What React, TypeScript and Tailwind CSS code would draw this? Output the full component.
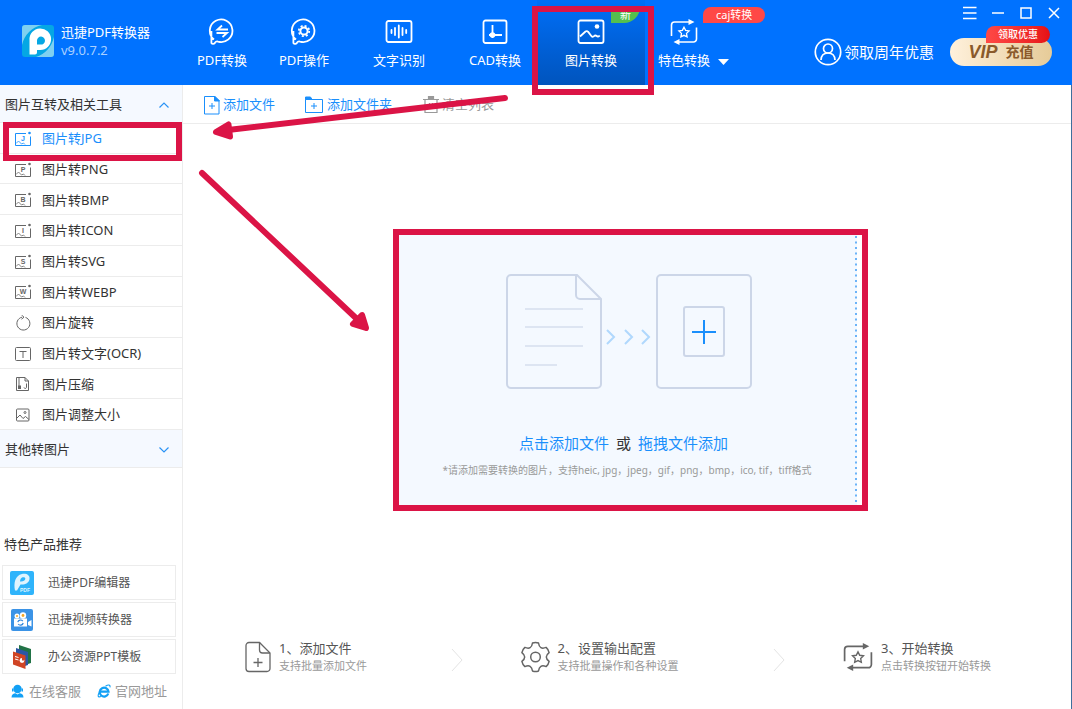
import type { ReactNode } from "react";

const imageTools = [
  { label: "图片转JPG", letter: "J", active: true },
  { label: "图片转PNG", letter: "P" },
  { label: "图片转BMP", letter: "B" },
  { label: "图片转ICON", letter: "I" },
  { label: "图片转SVG", letter: "S" },
  { label: "图片转WEBP", letter: "W" },
  { label: "图片旋转", icon: <RotateIcon /> },
  { label: "图片转文字(OCR)", icon: <OcrIcon /> },
  { label: "图片压缩", icon: <CompressIcon /> },
  { label: "图片调整大小", icon: <ResizeIcon /> },
];

const products = [
  { label: "迅捷PDF编辑器", icon: <EditorLogo /> },
  { label: "迅捷视频转换器", icon: <VideoLogo /> },
  { label: "办公资源PPT模板", icon: <PptLogo /> },
];

/* ---------- header icons ---------- */

function AppLogo() {
  return (
    <svg width="32" height="32" viewBox="0 0 32 32">
      <rect width="32" height="32" rx="3" fill="#05a7e4" />
      <path d="M0 20V3a3 3 0 0 1 3-3h17A26 26 0 0 0 0 20z" fill="#7fd0f0" />
      <path d="M32 12v17a3 3 0 0 1-3 3H14a27 27 0 0 0 18-20z" fill="#7fd0f0" />
      <path
        fillRule="evenodd"
        d="M7.500 29.500V15a10.800 10.800 0 1 1 10.800 10H15v2.500a2 2 0 0 1-2 2zM15 19.500h3.500a4 4 0 1 0-3.500-4z"
        fill="#fff"
      />
    </svg>
  );
}

function BubbleShape() {
  return (
    <path d="M6 21.500A11.300 11.300 0 1 1 10 23.600C8.500 23 7 24 6.800 25.200A2.200 2.200 0 0 1 3.400 25V13" />
  );
}

function PdfConvertIcon() {
  return (
    <svg width="28" height="28" viewBox="0 0 28 28" fill="none" stroke="#fff" strokeWidth="1.800">
      <BubbleShape />
      <path d="M20 11.500H9.500L14 7.500M8.500 15H19L14.500 19" />
    </svg>
  );
}

function PdfEditIcon() {
  return (
    <svg width="28" height="28" viewBox="0 0 28 28" fill="none" stroke="#fff" strokeWidth="1.800">
      <BubbleShape />
      <circle cx="14" cy="13" r="3.600" strokeWidth="2" />
      <circle cx="14" cy="13" r="5.200" strokeWidth="1.800" strokeDasharray="2.040 2.040" />
    </svg>
  );
}

function OcrWaveIcon() {
  return (
    <svg width="28" height="28" viewBox="0 0 28 28" fill="none" stroke="#fff" strokeWidth="1.800">
      <rect x="1.500" y="3" width="25" height="21" rx="2" />
      <path d="M6.500 12v3M10 10v7M13.800 7.500v12M17.500 10v7M21.200 12v3" strokeLinecap="round" />
    </svg>
  );
}

function CadIcon() {
  return (
    <svg width="28" height="28" viewBox="0 0 28 28" fill="none" stroke="#fff" strokeWidth="1.800">
      <rect x="2.500" y="2.500" width="23" height="22.500" rx="2" />
      <path d="M11.500 7v13M8 17h13" />
      <circle cx="11.500" cy="17" r="2.800" fill="#fff" stroke="none" />
    </svg>
  );
}

function PictureIcon() {
  return (
    <svg width="28" height="28" viewBox="0 0 28 28" fill="none" stroke="#fff" strokeWidth="1.800">
      <rect x="1.500" y="2.500" width="25" height="22.500" rx="2" />
      <path d="M3 18.500l5.500-5c1-.8 2-.5 2.700.4l3.300 4.300c.8.900 1.800.7 2.500 0 .9-1 1.800-1 2.700-.2.800.8 2 .7 3-.5" />
      <circle cx="20" cy="8.500" r="2.300" fill="#fff" stroke="none" />
    </svg>
  );
}

function StarCycleIcon({ color, size }: { color: string; size: number }) {
  return (
    <svg width={size} height={size} viewBox="0 0 28 28" fill="none" stroke={color} strokeWidth="1.600">
      <path d="M1.500 18V7a3 3 0 0 1 3-3H20M26.500 9.500V21a3 3 0 0 1-3 3H9" />
      <path d="M18.500 1l6 3-6 3zM9.500 21l-6 3 6 3z" fill={color} stroke="none" />
      <path
        d="M14 9.200l1.600 3.200 3.500.5-2.600 2.500.6 3.500-3.100-1.600-3.100 1.600.6-3.500-2.600-2.500 3.500-.5z"
        strokeWidth="1.300"
      />
    </svg>
  );
}

function UserIcon() {
  return (
    <svg width="28" height="28" viewBox="0 0 28 28" fill="none" stroke="#fff" strokeWidth="1.700">
      <circle cx="14" cy="14" r="12.700" />
      <circle cx="14" cy="10.500" r="4.500" />
      <path d="M7 22c.2-4.500 3-7 7-7s6.800 2.500 7 7" />
    </svg>
  );
}

/* ---------- sidebar icons ---------- */

function FormatIcon({ letter }: { letter: string }) {
  return (
    <svg width="18" height="16" viewBox="0 0 18 16" fill="none" stroke="currentColor">
      <path d="M12 2.500H1.500v12h15v-9" />
      <path d="M2 12.500l2.500-2.500 3 3 2-1 1.500 1.500" strokeWidth=".8" />
      <circle cx="15.500" cy="2" r="1.300" fill="currentColor" stroke="none" />
      <text
        x="9"
        y="10"
        textAnchor="middle"
        fill="currentColor"
        stroke="none"
        className="font-['Liberation_Sans',sans-serif] text-[7px] font-bold"
      >
        {letter}
      </text>
    </svg>
  );
}

function RotateIcon() {
  return (
    <svg width="18" height="16" viewBox="0 0 18 16" fill="none" stroke="currentColor">
      <path d="M11.500 2.400A6.500 6.500 0 1 1 8 2.200" />
      <path d="M7.500 0l2.500 2.200-2.500 2" />
    </svg>
  );
}

function OcrIcon() {
  return (
    <svg width="18" height="16" viewBox="0 0 18 16" fill="none" stroke="currentColor">
      <rect x="1.500" y="1.500" width="15" height="13" rx="1" />
      <path d="M5.500 5.500h7M9 5.500V12" />
    </svg>
  );
}

function CompressIcon() {
  return (
    <svg width="18" height="16" viewBox="0 0 18 16" fill="none" stroke="currentColor">
      <path d="M2.500 1.500h8.500l3.500 3.500v9.500h-12z" />
      <path d="M11 1.500V5h3.500M12.500 7.500v4a1.300 1.300 0 0 1-2.500 0" />
      <path d="M5 2.500v7" strokeWidth="2" strokeDasharray="1 1" />
      <rect x="4" y="9.500" width="3" height="3.500" fill="currentColor" stroke="none" />
    </svg>
  );
}

function ResizeIcon() {
  return (
    <svg width="18" height="16" viewBox="0 0 18 16" fill="none" stroke="currentColor">
      <rect x="2.500" y="2" width="12.500" height="12" rx="1" />
      <path d="M3 11l3-3 3 3.500 2.500-2 3.500 3" />
      <circle cx="11" cy="5.500" r="1" />
    </svg>
  );
}

function EditorLogo() {
  return (
    <svg width="24" height="24" viewBox="0 0 24 24">
      <rect width="24" height="24" rx="2" fill="#2fb4fb" />
      <path
        fillRule="evenodd"
        d="M5 19.500C3.500 12 5 4.500 12 3c5-.7 8 1.500 7.500 5-.5 4-4.500 6-9 5.500L7 19.500zM10 10.500c3 .3 5-.8 5.300-2.500.2-1.700-1.500-2.200-3.300-1.500-1.300.6-1.800 2.300-2 4z"
        fill="#dff4fe"
      />
      <text
        x="15"
        y="21"
        textAnchor="middle"
        fill="#dff4fe"
        className="font-['Liberation_Sans',sans-serif] text-[5px] font-bold"
      >
        PDF
      </text>
    </svg>
  );
}

function VideoLogo() {
  return (
    <svg width="24" height="24" viewBox="0 0 24 24">
      <rect x="1" y="1" width="22" height="22" rx="2" fill="#3b93e6" />
      <circle cx="7" cy="8" r="2.500" fill="#fff" />
      <circle cx="13" cy="7.500" r="3.200" fill="#fff" />
      <circle cx="7" cy="8" r="1" fill="#f5a623" />
      <circle cx="13" cy="7.500" r="1.400" fill="#f5a623" />
      <path d="M4 10.500h13v8H4zM18 14l3.500-2v6.500L18 17z" fill="#fff" />
      <path
        d="M7.800 14.200a2.800 2.800 0 0 1 5-1M13.200 15a2.800 2.800 0 0 1-5 1"
        fill="none"
        stroke="#2f86dd"
        strokeWidth="1.200"
      />
    </svg>
  );
}

function PptLogo() {
  return (
    <svg width="24" height="24" viewBox="0 0 24 24">
      <path d="M9 0l12 4v14l-3 1L9 15z" fill="#217346" />
      <path d="M6 3l12 4v13l-3 1L6 17z" fill="#2b57a5" />
      <path d="M3 6.500l12.500 4V24L3 19.500z" fill="#d04525" />
      <path d="M5 11.500l3.500 1M5 14l3.500 1" stroke="#fff" strokeWidth="1" />
      <circle cx="12" cy="15.500" r="2.400" fill="#fff" />
      <path d="M12 15.500v-2.500h2.400v2.500z" fill="#d04525" />
    </svg>
  );
}

function SupportIcon() {
  return (
    <svg width="13" height="14" viewBox="0 0 13 14" fill="#12a0f5">
      <circle cx="6.500" cy="5" r="4.200" />
      <path d="M1 4.500h1.500v3H1zM10.500 4.500H12v3h-1.500z" />
      <path d="M.5 13.500c0-3 2-4 4-4.200L6.500 10.500l2-1.200c2 .2 4 1.200 4 4.200z" />
    </svg>
  );
}

function BrowserIcon() {
  return (
    <svg width="14" height="14" viewBox="0 0 14 14" fill="none" stroke="#12a0f5">
      <path d="M11.300 9.500A4.400 4.400 0 1 1 11.500 7.700H3.500" strokeWidth="2.200" />
      <path d="M8.500 2.300C11 .6 13.500.3 13 3.300M2.500 8C.5 11 .3 14 4 12.500" strokeWidth="1.100" />
    </svg>
  );
}

/* ---------- toolbar and step icons ---------- */

function AddFileIcon() {
  return (
    <svg width="18" height="20" viewBox="0 0 18 20" fill="none" stroke="currentColor">
      <path d="M1.500 1.500h10l4.500 4v13.500h-14.500z" />
      <path d="M11.500 1v5h5z" fill="currentColor" />
      <path d="M9 8v6M6 11h6" />
    </svg>
  );
}

function AddFolderIcon() {
  return (
    <svg width="18" height="20" viewBox="0 0 18 20" fill="none" stroke="currentColor">
      <path d="M.5 4.500h17v13H.5z" />
      <path d="M.5 2h5l1.500 2.500H.5z" fill="currentColor" />
      <path d="M9 8v6M6 11h6" />
    </svg>
  );
}

function TrashIcon() {
  return (
    <svg width="18" height="20" viewBox="0 0 18 20" fill="none" stroke="currentColor" strokeWidth="1.200">
      <path d="M1 4.500h16M3 4.500v13h12v-13M7.500 8v6M10.500 8v6" />
      <path d="M6.500 1.500h5v2h-5z" fill="currentColor" />
    </svg>
  );
}

function StepFileIcon() {
  return (
    <svg width="26" height="32" viewBox="0 0 26 32" fill="none" stroke="#666" strokeWidth="1.300">
      <path d="M14.500 1.500H4a3 3 0 0 0-3 3v23a3 3 0 0 0 3 3h18a3 3 0 0 0 3-3V12z" />
      <path d="M14.500 1.500V9a3 3 0 0 0 3 3H25M13 17v9M8.500 21.500h9" />
    </svg>
  );
}

function StepGearIcon() {
  return (
    <svg width="29" height="32" viewBox="-0.5 0 29 32" fill="none" stroke="#666" strokeWidth="1.500" strokeLinejoin="round">
      <circle cx="14" cy="16" r="4.800" />
      <path d="M11 2Q14 .8 17 2Q18 9.100 24.600 6.400Q27 8.500 27.600 11.600Q22 16 27.600 20.400Q27 23.500 24.600 25.600Q18 22.900 17 30Q14 31.200 11 30Q10 22.900 3.400 25.600Q1 23.500 .4 20.400Q6 16 .4 11.600Q1 8.500 3.400 6.400Q10 9.100 11 2z" />
    </svg>
  );
}

function DropArt() {
  return (
    <svg width="246" height="116" viewBox="0 0 246 116" fill="none" stroke="#ccd6e8" strokeWidth="2">
      <path d="M71 1H5a4 4 0 0 0-4 4v105a4 4 0 0 0 4 4h86a4 4 0 0 0 4-4V25z" />
      <path d="M70 1v20a4 4 0 0 0 4 4h21" />
      <path d="M19 35h58M19 53h58M19 72h58M19 91h32" stroke="#dde5f2" />
      <path d="M101 56l7 7-7 7M119 56l7 7-7 7M136 56l7 7-7 7" stroke="#b0d8fd" />
      <rect x="151" y="1" width="94" height="113" rx="4" />
      <rect x="178" y="33" width="40" height="49" rx="2" />
      <path d="M186 58h24M198 46v24" stroke="#1a8ffc" />
    </svg>
  );
}

/* ---------- building blocks ---------- */

function NavItem({ label, icon, className }: { label: string; icon: ReactNode; className: string }) {
  return (
    <button className={`flex flex-col items-center gap-0.5 pt-[18px] text-white ${className}`}>
      {icon}
      <span className="leading-6">{label}</span>
    </button>
  );
}

function Step({ icon, title, note }: { icon: ReactNode; title: string; note: string }) {
  return (
    <div className="flex items-center gap-2">
      {icon}
      <div className="whitespace-nowrap">
        <p className="leading-[18px] text-[#555]">{title}</p>
        <p className="text-[11px] leading-[18px] text-[#999]">{note}</p>
      </div>
    </div>
  );
}

function StepArrow() {
  return (
    <svg width="12" height="24" viewBox="0 0 12 24" fill="none" stroke="#e4e4e4" className="mt-1.5">
      <path d="M1 1l10 11L1 23" />
    </svg>
  );
}

function Highlight({ className }: { className: string }) {
  return <div className={`pointer-events-none absolute z-10 border-6 border-[#db1446] ${className}`} />;
}

function Header() {
  return (
    <header className="flex h-[85px] shrink-0 bg-[#0072ff] text-white">
      <div className="flex w-[181px] shrink-0 items-center gap-[7px] pb-1 pl-[22px]">
        <AppLogo />
        <div className="whitespace-nowrap leading-[18px]">
          <p>迅捷PDF转换器</p>
          <p className="text-[#a9d0ff]">v9.0.7.2</p>
        </div>
      </div>

      <nav className="flex shrink-0">
        <NavItem label="PDF转换" icon={<PdfConvertIcon />} className="w-[82px]" />
        <NavItem label="PDF操作" icon={<PdfEditIcon />} className="w-[82px]" />
        <NavItem label="文字识别" icon={<OcrWaveIcon />} className="w-[108px]" />
        <NavItem label="CAD转换" icon={<CadIcon />} className="w-[84px]" />
        <div className="relative flex">
          <NavItem
            label="图片转换"
            icon={<PictureIcon />}
            className="w-[108px] bg-linear-to-b from-[#006ff8] to-[#0054bd]"
          />
          <span className="absolute top-[7px] right-[5px] rounded-br-2xl bg-[#55c04e] px-[9px] text-[11px] leading-4">
            新
          </span>
          <Highlight className="top-[6px] -right-[9px] -bottom-[10px] -left-[5px]" />
        </div>
        <div className="relative flex pl-[13px]">
          <NavItem label="特色转换" icon={<StarCycleIcon color="#fff" size={28} />} className="w-[52px]" />
          <svg width="11" height="6" viewBox="0 0 11 6" className="mt-[59px] ml-2">
            <path d="M0 0h11L5.500 6z" fill="#fff" />
          </svg>
          <span className="absolute top-[7px] left-[58px] rounded-full rounded-bl-none bg-[#ff4846] px-[13px] text-[11px] leading-4 whitespace-nowrap">
            caj转换
          </span>
        </div>
      </nav>

      <div className="ml-auto flex flex-col items-end">
        <div className="flex h-[26px] pr-1">
          <button aria-label="菜单" className="flex w-7 items-center justify-center">
            <svg width="14" height="14" viewBox="0 0 14 14" stroke="#fff" strokeWidth="1.500">
              <path d="M0 1.500h13.500M0 7h13.500M0 12.500h13.500" />
            </svg>
          </button>
          <button aria-label="最小化" className="flex w-7 items-center justify-center">
            <svg width="14" height="14" viewBox="0 0 14 14" stroke="#fff" strokeWidth="1.500">
              <path d="M1 7h12" />
            </svg>
          </button>
          <button aria-label="最大化" className="flex w-7 items-center justify-center">
            <svg width="14" height="14" viewBox="0 0 14 14" fill="none" stroke="#fff" strokeWidth="1.500">
              <rect x="2" y="2" width="10" height="10" />
            </svg>
          </button>
          <button aria-label="关闭" className="flex w-7 items-center justify-center">
            <svg width="14" height="14" viewBox="0 0 14 14" stroke="#fff" strokeWidth="1.500">
              <path d="M2 2l10 10M12 2L2 12" />
            </svg>
          </button>
        </div>
        <div className="flex items-center pt-3 pr-5">
          <button className="mr-4 flex items-center gap-0.5 text-[15px] leading-7 whitespace-nowrap">
            <UserIcon />
            领取周年优惠
          </button>
          <button className="relative flex h-7 w-[102px] items-center justify-center gap-2 rounded-full bg-linear-to-r from-[#fff1dc] to-[#e6cb98] text-[#8a5a2b]">
            <span className="font-['Liberation_Sans',sans-serif] text-lg font-bold italic">VIP</span>
            <span className="text-sm font-bold">充值</span>
            <span className="absolute -top-3 right-[2px] rounded-full rounded-bl-none bg-linear-to-r from-[#ff4846] to-[#e60f14] px-3 text-[10px] leading-[17px] font-medium whitespace-nowrap text-white">
              领取优惠
            </span>
          </button>
        </div>
      </div>
    </header>
  );
}

function Sidebar() {
  return (
    <aside className="flex w-[183px] shrink-0 flex-col border-r border-[#ececec] text-[#333]">
      <button className="flex h-[38px] shrink-0 items-center justify-between border-b border-[#ececec] bg-[#f5f9ff] pt-0.5 pr-[13px] pl-[5px]">
        图片互转及相关工具
        <svg width="10" height="6" viewBox="0 0 10 6" fill="none" stroke="#2a93f5" strokeWidth="1.200">
          <path d="M.5 5.500L5 1l4.500 4.500" />
        </svg>
      </button>
      <ul className="relative flex h-[307px] shrink-0 flex-col">
        {imageTools.map((tool) => (
          <li key={tool.label} className="flex flex-1 border-b border-[#ececec]">
            <button
              className={`flex w-full items-center gap-[10px] pt-0.5 pl-[14px] ${tool.active ? "text-[#1a8ffc]" : ""}`}
            >
              <span className={tool.active ? "" : "text-[#666]"}>
                {tool.icon ?? <FormatIcon letter={tool.letter ?? ""} />}
              </span>
              {tool.label}
            </button>
          </li>
        ))}
        <Highlight className="-top-px right-0 left-[3px] h-[39px]" />
      </ul>
      <button className="flex h-[38px] shrink-0 items-center justify-between border-b border-[#ececec] bg-[#f5f9ff] pt-0.5 pr-[13px] pl-[5px]">
        其他转图片
        <svg width="10" height="6" viewBox="0 0 10 6" fill="none" stroke="#2a93f5" strokeWidth="1.200">
          <path d="M.5 .5L5 5l4.500-4.500" />
        </svg>
      </button>

      <div className="mt-auto pb-2">
        <h2 className="mb-[11px] pl-1 leading-5">特色产品推荐</h2>
        <ul className="flex flex-col gap-0.5 pr-[6px] pl-0.5 text-xs text-[#555]">
          {products.map((product) => (
            <li key={product.label}>
              <a href="#" className="flex h-[35px] items-center gap-[14px] border border-[#ececec] pl-[7px]">
                {product.icon}
                {product.label}
              </a>
            </li>
          ))}
        </ul>
        <div className="mt-[7px] flex justify-between pr-[15px] pl-[11px] leading-5 text-[#999]">
          <a href="#" className="flex items-center gap-[5px]">
            <SupportIcon />
            在线客服
          </a>
          <a href="#" className="flex items-center gap-1">
            <BrowserIcon />
            官网地址
          </a>
        </div>
      </div>
    </aside>
  );
}

function Workspace() {
  return (
    <main className="flex min-w-0 flex-1 flex-col border-r border-[#3f6f9c]">
      <div className="flex h-[39px] shrink-0 items-center gap-[30px] border-b border-[#ececec] pt-0.5 pl-5 text-[#1a8ffc]">
        <button className="flex items-center gap-[2px]">
          <AddFileIcon />
          添加文件
        </button>
        <button className="flex items-center gap-1">
          <AddFolderIcon />
          添加文件夹
        </button>
        <button className="flex items-center gap-[2px] text-[#999]">
          <TrashIcon />
          清空列表
        </button>
      </div>

      <section className="relative mx-auto mt-[110px] flex h-[272px] w-[460px] shrink-0 flex-col items-center bg-[#f4f9ff] pt-10">
        <div className="pl-1">
          <DropArt />
        </div>
        <div className="mt-[41px] flex gap-[7px] pr-[7px] text-[15px] leading-6 text-[#1a8ffc]">
          <button>点击添加文件</button>
          <span className="text-[#333]">或</span>
          <button>拖拽文件添加</button>
        </div>
        <p className="mt-[7px] text-[10px] leading-4 whitespace-nowrap text-[#999]">
          *请添加需要转换的图片，支持heic, jpg，jpeg，gif，png，bmp，ico, tif，tiff格式
        </p>
        <svg className="absolute top-0 right-0 h-full w-[2px]">
          <line x1="1" y1="2" x2="1" y2="100%" stroke="#6bb3f8" strokeWidth="2" strokeDasharray="2 3.500" />
        </svg>
        <Highlight className="-top-[5px] -right-[11px] -bottom-[5px] -left-1" />
      </section>

      <div className="mt-auto grid grid-cols-[276fr_323fr_auto] pr-20 pb-[34px] pl-[62px]">
        <div className="flex items-center justify-between pr-[58px]">
          <Step icon={<StepFileIcon />} title="1、添加文件" note="支持批量添加文件" />
          <StepArrow />
        </div>
        <div className="flex items-center justify-between pr-[58px]">
          <Step icon={<StepGearIcon />} title="2、设置输出配置" note="支持批量操作和各种设置" />
          <StepArrow />
        </div>
        <Step icon={<StarCycleIcon color="#666" size={30} />} title="3、开始转换" note="点击转换按钮开始转换" />
      </div>
    </main>
  );
}

export default function App() {
  return (
    <div className="relative flex min-h-screen flex-col bg-white font-['Noto_Sans','Noto_Sans_CJK_SC',sans-serif] text-[13px]">
      <Header />
      <div className="flex flex-1">
        <Sidebar />
        <Workspace />
      </div>

      {/* Guide arrows drawn over the window */}
      <svg
        className="pointer-events-none absolute top-0 left-0 z-20"
        width="520"
        height="340"
        viewBox="0 0 520 340"
        fill="#db1446"
        stroke="#db1446"
        strokeLinecap="round"
        strokeLinejoin="round"
      >
        <path d="M505 98L228 130" strokeWidth="6" />
        <path d="M216 132l12.500-7.500 1.500 12z" strokeWidth="6" />
        <path d="M202 173L358 320" strokeWidth="6" />
        <path d="M366 328l-4-13-9 9z" strokeWidth="6" />
      </svg>
    </div>
  );
}
